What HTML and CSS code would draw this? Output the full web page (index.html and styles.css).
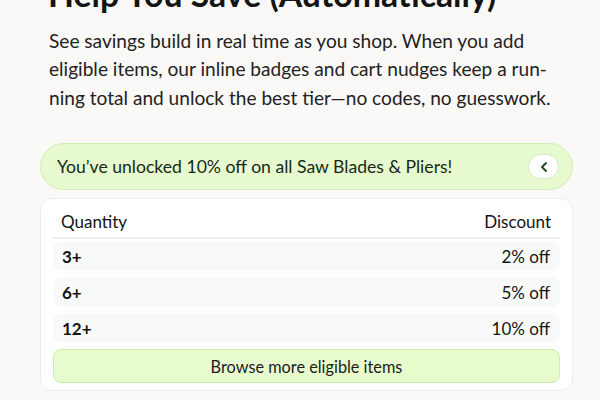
FILE: index.html
```html
<!DOCTYPE html>
<html>
<head>
<meta charset="utf-8">
<link rel="stylesheet" href="styles.css">
</head>
<body>
<div class="page">
  <h1 class="title">Help You Save (Automatically)</h1>
  <p class="lead">See savings build in real time as you shop. When you add<br>eligible items, our inline badges and cart nudges keep a run-<br>ning total and unlock the best tier—no codes, no guesswork.</p>
  <div class="banner">
    <span class="banner-text">You’ve unlocked 10% off on all Saw Blades &amp; Pliers!</span>
    <button class="toggle" aria-label="Collapse">
      <svg width="10" height="12" viewBox="0 0 10 12"><path d="M7 2 L3 6 L7 10" fill="none" stroke="#1d4d23" stroke-width="1.9" stroke-linecap="round" stroke-linejoin="round"/></svg>
    </button>
  </div>
  <div class="card">
    <div class="thead">
      <span>Quantity</span>
      <span>Discount</span>
    </div>
    <div class="rows">
      <div class="row"><span class="qty">3+</span><span class="off">2% off</span></div>
      <div class="row"><span class="qty">6+</span><span class="off">5% off</span></div>
      <div class="row"><span class="qty">12+</span><span class="off">10% off</span></div>
    </div>
    <button class="browse">Browse more eligible items</button>
  </div>
</div>
</body>
</html>
```
FILE: styles.css
```css
* { box-sizing: border-box; }
html, body { margin: 0; padding: 0; }
body {
  background: #faf9f7;
  font-family: "Lato", "Noto Sans", sans-serif;
  color: #1c1c1c;
  width: 600px;
  height: 400px;
  overflow: hidden;
}
.page {
  padding: 0 27px 0 40px;
}
.title {
  margin: -26px 0 0 8px;
  font-size: 33.8px;
  font-weight: 700;
  line-height: 40px;
  color: #141414;
  white-space: nowrap;
}
.lead {
  margin: 13px 0 0 9px;
  font-size: 19.1px;
  line-height: 28.4px;
  color: #222;
  white-space: nowrap;
}
.banner {
  margin-top: 31px;
  height: 47px;
  border-radius: 24px;
  background: #e7f9cf;
  border: 1px solid #cfeeb4;
  display: flex;
  align-items: center;
  justify-content: space-between;
  padding: 0 13px 0 16px;
}
.banner-text {
  font-size: 17.6px;
  color: #172a17;
}
.toggle {
  width: 31px;
  height: 25px;
  border-radius: 13px;
  background: #fff;
  border: 1px solid #d6ecc6;
  display: flex;
  align-items: center;
  justify-content: center;
  padding: 0;
}
.card {
  margin-top: 8px;
  background: #fff;
  border: 1px solid #ececec;
  border-radius: 12px;
  padding: 0 12px 7px;
}
.thead {
  display: flex;
  justify-content: space-between;
  padding: 6px 9px 0 8px;
  height: 40px;
  align-items: center;
  border-bottom: 2px solid #eef0ef;
  font-size: 17px;
  color: #141414;
}
.rows {
  display: flex;
  flex-direction: column;
  gap: 6px;
  margin-top: 2px;
}
.row {
  display: flex;
  justify-content: space-between;
  align-items: center;
  height: 30px;
  padding: 0 10px 0 9px;
  background: #f8fafa;
  border-radius: 8px;
  font-size: 17px;
  color: #141414;
}
.qty { font-weight: 700; }
.browse {
  display: block;
  margin-top: 6px;
  width: 100%;
  height: 34px;
  border-radius: 8px;
  background: #e7fbcd;
  border: 1px solid #c9eea8;
  font-family: inherit;
  font-size: 16.3px;
  color: #1c1c1c;
}
```
